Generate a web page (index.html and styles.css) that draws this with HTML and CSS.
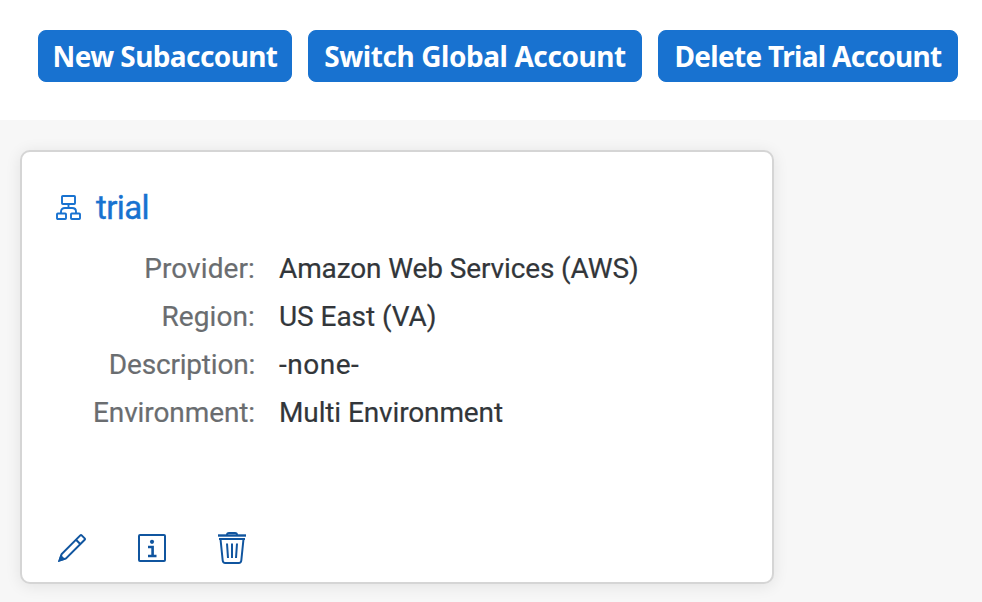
FILE: index.html
```html
<!DOCTYPE html>
<html lang="en">
<head>
<meta charset="utf-8">
<title>Subaccounts</title>
<link rel="stylesheet" href="styles.css">
</head>
<body>
<header class="toolbar">
  <button class="btn btn-new"><span>New Subaccount</span></button>
  <button class="btn btn-switch"><span>Switch Global Account</span></button>
  <button class="btn btn-delete"><span>Delete Trial Account</span></button>
</header>
<main class="content">
  <article class="card">
    <h2 class="card-title">
      <svg class="tree" width="26" height="28" viewBox="0 0 26 28" aria-hidden="true"><rect x="7" y="3" width="13" height="8" rx=".8"/><path d="M13.5 11v4M6 20V18.5Q6 15 10 15h7q4 0 4 3.5V20"/><rect x="2" y="20.5" width="9" height="5.5" rx=".8"/><rect x="16" y="20.5" width="9" height="5.5" rx=".8"/></svg>
      <a class="name">trial</a>
    </h2>
    <dl class="details">
      <dt><span class="l1">Provider:</span></dt><dd><span class="v1">Amazon Web Services (AWS)</span></dd>
      <dt><span class="l2">Region:</span></dt><dd><span class="v2">US East (VA)</span></dd>
      <dt><span class="l3">Description:</span></dt><dd><span class="v3">-none-</span></dd>
      <dt><span class="l4">Environment:</span></dt><dd><span class="v4">Multi Environment</span></dd>
    </dl>
    <div class="actions">
      <svg width="32" height="36" viewBox="0 0 32 36" aria-label="Edit"><path d="M3.5 30.5l2.2-6.5L24.3 5.4q.7-.7 1.4 0l3 3q.7.7 0 1.4L10 28.4zM20 9.8l4.5 4.5"/><path class="solid" d="M2 32l2.5-7.5 5.2 5z"/></svg>
      <svg width="32" height="36" viewBox="0 0 32 36" aria-label="Information"><rect x="3" y="5" width="26" height="26" rx="1"/><circle class="solid" cx="16" cy="11.8" r="2.1"/><path d="M12 17h4.6v9M12 26h8.5" stroke-width="2.6"/></svg>
      <svg width="32" height="36" viewBox="0 0 32 36" aria-label="Delete"><path d="M2 5.5h28" stroke-width="2.4"/><path d="M11 5q0-2 2-2h6q2 0 2 2M3 9h26M4.5 9l2.2 21.5Q7 33 9.2 33h13.6q2.2 0 2.5-2.5L27.5 9M11 13.5l1 14.5M16 13.5V28M21 13.5L20 28"/></svg>
    </div>
  </article>
</main>
</body>
</html>
```
FILE: styles.css
```css
* { box-sizing: border-box; }
body {
  margin: 0;
  height: 602px;
  overflow: hidden;
  background: #f7f7f7;
  color: #32363a;
  font-family: Roboto, "Liberation Sans", sans-serif;
}
.toolbar {
  display: flex;
  gap: 16px;
  height: 120px;
  padding: 30px 24px 0 38px;
  background: #fff;
}
.btn {
  height: 52px;
  padding: 0;
  border: 1px solid #1872d0;
  border-radius: 8px;
  background: #1872d0;
  color: #fff;
  font: 700 28px/50px "Noto Sans", sans-serif;
  letter-spacing: -.6px;
  white-space: nowrap;
}
.btn-new { width: 254px; }
.btn-switch { width: 334px; letter-spacing: -.42px; }
.btn-delete { width: 300px; letter-spacing: -.68px; }
.content { padding: 30px 20px; }
.card {
  display: flex;
  flex-direction: column;
  width: 754px;
  height: 434px;
  padding: 33px 34px 16px;
  border: 2px solid #d5d5d5;
  border-radius: 10px;
  background: #fff;
  box-shadow: 0 2px 16px rgba(0, 0, 0, .09);
}
.card-title {
  display: flex;
  align-items: center;
  gap: 15px;
  height: 44px;
  margin: 0;
  color: #1872d0;
  font-size: 33px;
  font-weight: 400;
}
.name { letter-spacing: -.6px; -webkit-text-stroke: .4px #1872d0; }
svg {
  flex: none;
  fill: none;
  stroke: #10559f;
  stroke-width: 2;
}
svg .solid { fill: #10559f; stroke: none; }
.tree { margin-left: -1px; stroke: #1872d0; stroke-width: 1.9; }
.details {
  display: grid;
  grid-template-columns: 199px 1fr;
  grid-auto-rows: 48px;
  column-gap: 24px;
  margin: 16px 0 0;
  font-size: 28px;
  line-height: 48px;
  white-space: nowrap;
  -webkit-text-stroke: .2px currentColor;
}
dt { color: #6a6d70; text-align: right; }
dd { margin: 0; }
.l1, .l2 { letter-spacing: .1px; }
.l3 { letter-spacing: -.2px; }
.l4 { letter-spacing: -.1px; }
.v1, .v4 { letter-spacing: -.12px; }
.v2 { letter-spacing: -.05px; }
.v3 { letter-spacing: .5px; }
.actions {
  display: flex;
  gap: 48px;
  margin-top: auto;
}
```
